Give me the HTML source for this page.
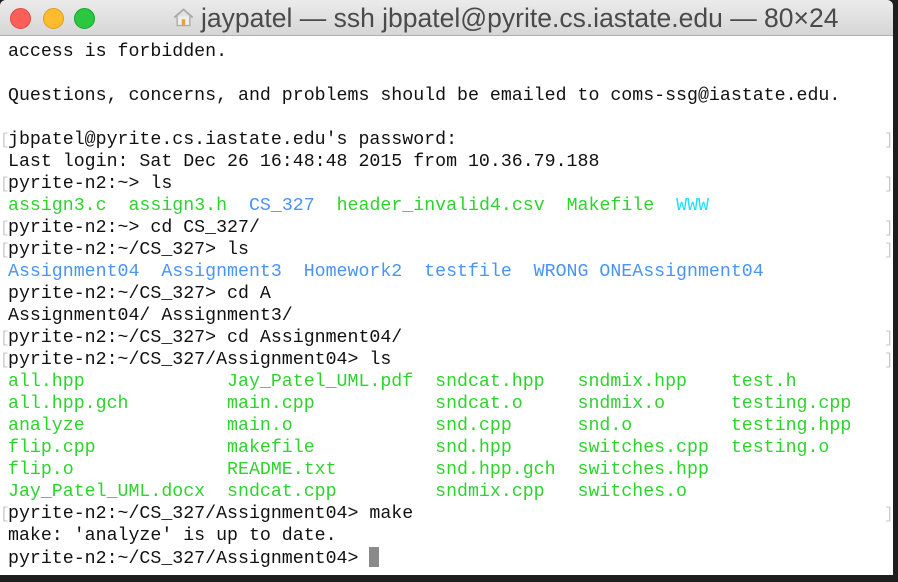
<!DOCTYPE html>
<html><head><meta charset="utf-8"><style>
html,body{margin:0;padding:0;width:898px;height:582px;overflow:hidden;background:#1e1e1e;}
.win{position:absolute;left:0;top:0;width:893px;height:575px;background:#fff;border-radius:6px 6px 0 0;overflow:hidden;}
.title{position:absolute;left:0;top:0;width:893px;height:35px;background:linear-gradient(#ebebeb,#d6d6d6);border-bottom:1px solid #b0b0b0;}
.dot{position:absolute;top:8px;width:19px;height:19px;border-radius:50%;}
.t{position:absolute;left:201px;top:3px;font:26.5px/30px "Liberation Sans",sans-serif;color:#4a4a4a;white-space:nowrap;}
pre{position:absolute;left:8px;top:41px;margin:0;font:18.25px/22px "Liberation Mono",monospace;color:#111;}
.g{color:#2ed42e}.b{color:#4a94f5}.c{color:#22e0ff}
.m{position:absolute;font:16px/22px "Liberation Mono",monospace;color:#ccc;}
.cur{display:inline-block;width:10px;height:20px;background:#8a8a8a;vertical-align:-4px;}
</style></head><body>
<div class="win">
<div class="title">
<div class="dot" style="left:10px;background:#fc5f57;border:0.5px solid #de4a42"></div>
<div class="dot" style="left:43px;background:#fdbc2e;border:0.5px solid #de9f20"></div>
<div class="dot" style="left:74px;background:#29c840;border:0.5px solid #1aa52c"></div>
<svg style="position:absolute;left:172px;top:6px" width="23" height="23" viewBox="0 0 20 20"><path d="M2 10 L10 3 L18 10" fill="none" stroke="#aaa" stroke-width="1.6"/><path d="M4.5 9 V17 H15.5 V9" fill="#eee" stroke="#aaa" stroke-width="1.2"/><rect x="8.5" y="11.5" width="3" height="5.5" fill="#e8a23a"/></svg>
<div class="t">jaypatel — ssh jbpatel@pyrite.cs.iastate.edu — 80×24</div>
</div>
<pre>access is forbidden.

Questions, concerns, and problems should be emailed to coms-ssg@iastate.edu.

jbpatel@pyrite.cs.iastate.edu's password:
Last login: Sat Dec 26 16:48:48 2015 from 10.36.79.188
pyrite-n2:~> ls
<span class="g">assign3.c</span>  <span class="g">assign3.h</span>  <span class="b">CS_327</span>  <span class="g">header_invalid4.csv</span>  <span class="g">Makefile</span>  <span class="c">WWW</span>
pyrite-n2:~> cd CS_327/
pyrite-n2:~/CS_327> ls
<span class="b">Assignment04  Assignment3  Homework2  testfile  WRONG ONEAssignment04</span>
pyrite-n2:~/CS_327> cd A
Assignment04/ Assignment3/
pyrite-n2:~/CS_327> cd Assignment04/
pyrite-n2:~/CS_327/Assignment04> ls
<span class="g">all.hpp             Jay_Patel_UML.pdf  sndcat.hpp   sndmix.hpp    test.h
all.hpp.gch         main.cpp           sndcat.o     sndmix.o      testing.cpp
analyze             main.o             snd.cpp      snd.o         testing.hpp
flip.cpp            makefile           snd.hpp      switches.cpp  testing.o
flip.o              README.txt         snd.hpp.gch  switches.hpp
Jay_Patel_UML.docx  sndcat.cpp         sndmix.cpp   switches.o</span>
pyrite-n2:~/CS_327/Assignment04> make
make: 'analyze' is up to date.
pyrite-n2:~/CS_327/Assignment04> <span class="cur"></span></pre>
<div class="m" style="left:0;top:129px">[</div><div class="m" style="left:884px;top:129px">]</div>
<div class="m" style="left:0;top:173px">[</div><div class="m" style="left:884px;top:173px">]</div>
<div class="m" style="left:0;top:217px">[</div><div class="m" style="left:884px;top:217px">]</div>
<div class="m" style="left:0;top:239px">[</div><div class="m" style="left:884px;top:239px">]</div>
<div class="m" style="left:0;top:327px">[</div><div class="m" style="left:884px;top:327px">]</div>
<div class="m" style="left:0;top:349px">[</div><div class="m" style="left:884px;top:349px">]</div>
<div class="m" style="left:0;top:503px">[</div><div class="m" style="left:884px;top:503px">]</div>
</div>
</body></html>
